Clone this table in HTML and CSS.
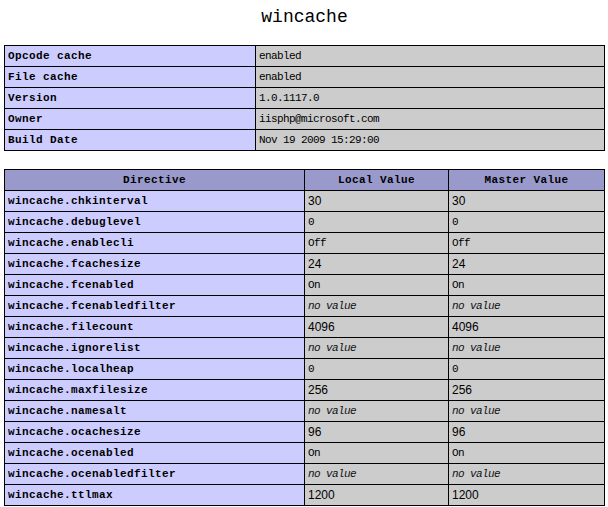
FILE: index.html
```html
<!DOCTYPE html>
<html>
<head>
<meta charset="utf-8">
<title>wincache</title>
<link rel="stylesheet" href="styles.css">
</head>
<body>
<div class="center">
<h2 class="title">wincache</h2>
<table class="info">
<tr><td class="e">Opcode cache</td><td class="v">enabled</td></tr>
<tr><td class="e">File cache</td><td class="v">enabled</td></tr>
<tr><td class="e">Version</td><td class="v">1.0.1117.0</td></tr>
<tr><td class="e">Owner</td><td class="v">iisphp@microsoft.com</td></tr>
<tr><td class="e">Build Date</td><td class="v">Nov 19 2009 15:29:00</td></tr>
</table>
<table class="dirs">
<tr class="h"><th class="c1">Directive</th><th class="c2">Local Value</th><th class="c3">Master Value</th></tr>
<tr><td class="e">wincache.chkinterval</td><td class="v n">30</td><td class="v n">30</td></tr>
<tr><td class="e">wincache.debuglevel</td><td class="v">0</td><td class="v">0</td></tr>
<tr><td class="e">wincache.enablecli</td><td class="v">Off</td><td class="v">Off</td></tr>
<tr><td class="e">wincache.fcachesize</td><td class="v n">24</td><td class="v n">24</td></tr>
<tr><td class="e">wincache.fcenabled</td><td class="v">On</td><td class="v">On</td></tr>
<tr><td class="e">wincache.fcenabledfilter</td><td class="v"><i>no value</i></td><td class="v"><i>no value</i></td></tr>
<tr><td class="e">wincache.filecount</td><td class="v n">4096</td><td class="v n">4096</td></tr>
<tr><td class="e">wincache.ignorelist</td><td class="v"><i>no value</i></td><td class="v"><i>no value</i></td></tr>
<tr><td class="e">wincache.localheap</td><td class="v">0</td><td class="v">0</td></tr>
<tr><td class="e">wincache.maxfilesize</td><td class="v n">256</td><td class="v n">256</td></tr>
<tr><td class="e">wincache.namesalt</td><td class="v"><i>no value</i></td><td class="v"><i>no value</i></td></tr>
<tr><td class="e">wincache.ocachesize</td><td class="v n">96</td><td class="v n">96</td></tr>
<tr><td class="e">wincache.ocenabled</td><td class="v">On</td><td class="v">On</td></tr>
<tr><td class="e">wincache.ocenabledfilter</td><td class="v"><i>no value</i></td><td class="v"><i>no value</i></td></tr>
<tr><td class="e">wincache.ttlmax</td><td class="v n">1200</td><td class="v n">1200</td></tr>
</table>
</div>
</body>
</html>
```
FILE: styles.css
```css
html, body {
  margin: 0;
  padding: 0;
  background: #ffffff;
  color: #000000;
}
body {
  font-family: "Liberation Mono", "DejaVu Sans Mono", monospace;
}
.center {
  padding: 0 0 0 4px;
  width: 601px;
}
.title {
  margin: 0;
  padding: 7px 0 0 0;
  height: 45px;
  box-sizing: border-box;
  text-align: center;
  font-size: 18px;
  font-weight: normal;
  line-height: 20px;
}
table {
  border-collapse: collapse;
  width: 601px;
  table-layout: fixed;
}
.info {
  margin: 0 0 18px 0;
}
.info .e { width: 244px; }
td, th {
  border: 1px solid #000000;
  font-size: 11px;
  line-height: 14px;
  height: 14px;
  padding: 3px 3px;
  text-align: left;
  white-space: nowrap;
  overflow: hidden;
  letter-spacing: -0.6px;
}
.e {
  background: #ccccff;
  font-weight: bold;
  letter-spacing: 0.4px;
}
.h th {
  background: #9999cc;
  font-weight: bold;
  text-align: center;
  letter-spacing: 0.4px;
}
.c1 { width: 293px; }
.c2 { width: 137px; }
.v {
  background: #cccccc;
}
.n {
  font-family: "Liberation Sans", Arial, sans-serif;
  font-size: 12px;
  letter-spacing: 0;
}
i {
  color: #111111;
  font-style: italic;
}
```
